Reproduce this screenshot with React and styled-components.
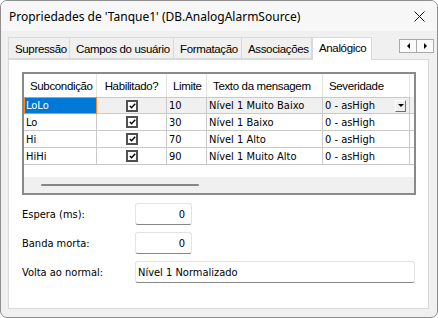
import React from 'react';
import styled, { createGlobalStyle } from 'styled-components';

const ui = `"Segoe UI", "Noto Sans", sans-serif`;
const narrowUi = `"Liberation Sans", Arial, sans-serif`;
const classic = `"DejaVu Sans Condensed", "DejaVu Sans", sans-serif`;

const GlobalStyle = createGlobalStyle`
  html, body {
    margin: 0;
    padding: 0;
    background: #ffffff;
  }
`;

const Window = styled.div`
  box-sizing: border-box;
  width: 438px;
  height: 318px;
  border: 1px solid #8f8f8f;
  border-radius: 7px;
  background: #f0f0f0;
  overflow: hidden;
  display: flex;
  flex-direction: column;
`;

const TitleBar = styled.div`
  height: 30px;
  flex-shrink: 0;
  background: #f7f7f7;
  display: flex;
  align-items: center;
  justify-content: space-between;
  padding: 0 8px 0 8px;
  font-family: ${ui};
  font-size: 12px;
  color: #000;
`;

const CloseButton = styled.div`
  width: 14px;
  height: 14px;
  display: flex;
  align-items: center;
  justify-content: center;
  margin-right: 3px;
`;

const Body = styled.div`
  flex: 1;
  display: flex;
  flex-direction: column;
  padding: 5px 8px 8px 7px;
`;

const TabStrip = styled.div`
  height: 23px;
  display: flex;
  align-items: flex-end;
  position: relative;
`;

const Tab = styled.div`
  box-sizing: border-box;
  width: ${(p) => p.w}px;
  height: ${(p) => (p.active ? 23 : 22)}px;
  border: 1px solid #d9d9d9;
  border-bottom: ${(p) => (p.active ? 'none' : '1px solid #d9d9d9')};
  border-left: ${(p) => (p.first || p.active ? '1px solid #d9d9d9' : 'none')};
  background: ${(p) => (p.active ? '#ffffff' : '#f0f0f0')};
  font-family: ${narrowUi};
  font-size: 11.5px;
  letter-spacing: -0.35px;
  color: #000;
  padding: ${(p) => (p.active ? '4px 0 0 6px' : '5px 0 0 6px')};
  white-space: nowrap;
  margin-bottom: ${(p) => (p.active ? '-1px' : '0')};
  position: relative;
  z-index: ${(p) => (p.active ? 2 : 1)};
`;

const Scroller = styled.div`
  position: absolute;
  right: -5px;
  top: 3px;
  display: flex;
`;

const ScrollArrow = styled.div`
  box-sizing: border-box;
  width: 18px;
  height: 14px;
  background: #fbfbfb;
  border: 1px solid #a9a9a9;
  margin-left: ${(p) => (p.second ? '-1px' : '0')};
  display: flex;
  align-items: center;
  justify-content: center;
`;

const Panel = styled.div`
  flex: 1;
  box-sizing: border-box;
  background: #ffffff;
  border: 1px solid #d9d9d9;
  padding: 12px 0 0 13px;
  display: flex;
  flex-direction: column;
`;

const Grid = styled.div`
  box-sizing: border-box;
  width: 394px;
  height: 123px;
  border: 2px solid #8a8a8a;
  background: #ffffff;
  display: flex;
  flex-direction: column;
`;

const Row = styled.div`
  display: flex;
  height: ${(p) => (p.header ? 23 : 17)}px;
  background: ${(p) => (p.selected ? '#f0f0f0' : '#ffffff')};
`;

const HeadCell = styled.div`
  box-sizing: border-box;
  width: ${(p) => p.w}px;
  border-right: 1px solid #e3e3e3;
  font-family: ${narrowUi};
  font-size: 11.5px;
  letter-spacing: -0.35px;
  color: #000;
  display: flex;
  align-items: center;
  justify-content: ${(p) => (p.center ? 'center' : 'flex-start')};
  padding-left: ${(p) => (p.center ? 0 : 6)}px;
  white-space: nowrap;
`;

const Cell = styled.div`
  box-sizing: border-box;
  width: ${(p) => p.w}px;
  border-right: 1px solid #c9c9c9;
  border-bottom: 1px solid #c9c9c9;
  border-top: ${(p) => (p.top ? '1px solid #c9c9c9' : 'none')};
  font-family: ${classic};
  font-size: 11px;
  color: ${(p) => (p.focus ? '#ffffff' : '#000')};
  background: ${(p) => (p.focus ? '#0078d7' : 'transparent')};
  outline: ${(p) => (p.focus ? '1px solid #ff8c1a' : 'none')};
  outline-offset: -1px;
  display: flex;
  align-items: center;
  justify-content: ${(p) => (p.center ? 'center' : 'space-between')};
  padding: 0 1px 0 2px;
  white-space: nowrap;
`;

const Filler = styled.div`
  flex: 1;
  border-bottom: ${(p) => (p.line ? '1px solid #c9c9c9' : 'none')};
`;

const Check = styled.div`
  box-sizing: border-box;
  width: 12px;
  height: 12px;
  border: 2px solid #505050;
  background: #fff;
  display: flex;
  align-items: center;
  justify-content: center;
`;

const DropButton = styled.div`
  box-sizing: border-box;
  width: 11px;
  height: 12px;
  background: #f0f0f0;
  border-top: 1px solid #ffffff;
  border-left: 1px solid #ffffff;
  border-right: 1px solid #6d6d6d;
  border-bottom: 1px solid #6d6d6d;
  display: flex;
  align-items: center;
  justify-content: center;
  margin-right: 2px;
`;

const Blank = styled.div`
  flex: 1;
`;

const HScroll = styled.div`
  height: 16px;
  background: #f0f0f0;
  display: flex;
  align-items: center;
  padding-left: 17px;
`;

const Thumb = styled.div`
  width: 158px;
  height: 2px;
  background: #858585;
  border-radius: 1px;
`;

const Fields = styled.div`
  display: flex;
  flex-direction: column;
  gap: 7px;
  margin-top: 8px;
`;

const FieldRow = styled.div`
  display: flex;
  align-items: center;
`;

const Label = styled.div`
  width: 113px;
  font-family: ${classic};
  font-size: 11px;
  color: #000;
`;

const Input = styled.div`
  box-sizing: border-box;
  width: ${(p) => p.w}px;
  height: 22px;
  border: 1px solid #e3e3e3;
  border-bottom: 1px solid #878787;
  border-radius: 3px;
  background: #fff;
  font-family: ${classic};
  font-size: 11px;
  color: #000;
  display: flex;
  align-items: center;
  justify-content: ${(p) => (p.right ? 'flex-end' : 'flex-start')};
  padding: ${(p) => (p.right ? '0 6px 0 0' : '0 0 0 2px')};
`;

const tabs = [
  { label: 'Supressão', w: 62 },
  { label: 'Campos do usuário', w: 104 },
  { label: 'Formatação', w: 68 },
  { label: 'Associações', w: 70 },
  { label: 'Analógico', w: 60, active: true },
];

const cols = [73, 70, 40, 116, 87];

const rows = [
  { name: 'LoLo', limit: '10', text: 'Nível 1 Muito Baixo' },
  { name: 'Lo', limit: '30', text: 'Nível 1 Baixo' },
  { name: 'Hi', limit: '70', text: 'Nível 1 Alto' },
  { name: 'HiHi', limit: '90', text: 'Nível 1 Muito Alto' },
];

const CheckMark = () => (
  <svg width="7" height="6" viewBox="0 0 7 6">
    <path d="M0.8 3 L2.6 4.8 L6.2 0.8" fill="none" stroke="#000" strokeWidth="1.4" />
  </svg>
);

const Triangle = ({ dir }) => {
  const d = { down: 'M0 0 L6 0 L3 3 Z', left: 'M3 0 L3 6 L0 3 Z', right: 'M0 0 L0 6 L3 3 Z' }[dir];
  const size = dir === 'down' ? [6, 3] : [3, 6];
  return (
    <svg width={size[0]} height={size[1]} viewBox={`0 0 ${size[0]} ${size[1]}`}>
      <path d={d} fill="#000" />
    </svg>
  );
};

export default function App() {
  return (
    <>
      <GlobalStyle />
      <Window>
        <TitleBar>
          <span>Propriedades de 'Tanque1' (DB.AnalogAlarmSource)</span>
          <CloseButton>
            <svg width="11" height="11" viewBox="0 0 11 11">
              <path d="M0.5 0.5 L10.5 10.5 M10.5 0.5 L0.5 10.5" stroke="#1a1a1a" strokeWidth="1" />
            </svg>
          </CloseButton>
        </TitleBar>
        <Body>
          <TabStrip>
            {tabs.map((t, i) => (
              <Tab key={t.label} w={t.w} active={t.active} first={i === 0}>
                {t.label}
              </Tab>
            ))}
            <Scroller>
              <ScrollArrow>
                <Triangle dir="left" />
              </ScrollArrow>
              <ScrollArrow second>
                <Triangle dir="right" />
              </ScrollArrow>
            </Scroller>
          </TabStrip>
          <Panel>
            <Grid>
              <Row header>
                <HeadCell w={cols[0]}>Subcondição</HeadCell>
                <HeadCell w={cols[1]} center>Habilitado?</HeadCell>
                <HeadCell w={cols[2]}>Limite</HeadCell>
                <HeadCell w={cols[3]}>Texto da mensagem</HeadCell>
                <HeadCell w={cols[4]}>Severidade</HeadCell>
                <Filler />
              </Row>
              {rows.map((r, i) => (
                <Row key={r.name} selected={i === 0}>
                  <Cell w={cols[0]} focus={i === 0} top={i === 0}>{r.name}</Cell>
                  <Cell w={cols[1]} center top={i === 0}>
                    <Check>
                      <CheckMark />
                    </Check>
                  </Cell>
                  <Cell w={cols[2]} top={i === 0}>{r.limit}</Cell>
                  <Cell w={cols[3]} top={i === 0}>{r.text}</Cell>
                  <Cell w={cols[4]} top={i === 0}>
                    <span>0 - asHigh</span>
                    {i === 0 && (
                      <DropButton>
                        <Triangle dir="down" />
                      </DropButton>
                    )}
                  </Cell>
                  <Filler line />
                </Row>
              ))}
              <Blank />
              <HScroll>
                <Thumb />
              </HScroll>
            </Grid>
            <Fields>
              <FieldRow>
                <Label>Espera (ms):</Label>
                <Input w={57} right>0</Input>
              </FieldRow>
              <FieldRow>
                <Label>Banda morta:</Label>
                <Input w={57} right>0</Input>
              </FieldRow>
              <FieldRow>
                <Label>Volta ao normal:</Label>
                <Input w={280}>Nível 1 Normalizado</Input>
              </FieldRow>
            </Fields>
          </Panel>
        </Body>
      </Window>
    </>
  );
}
